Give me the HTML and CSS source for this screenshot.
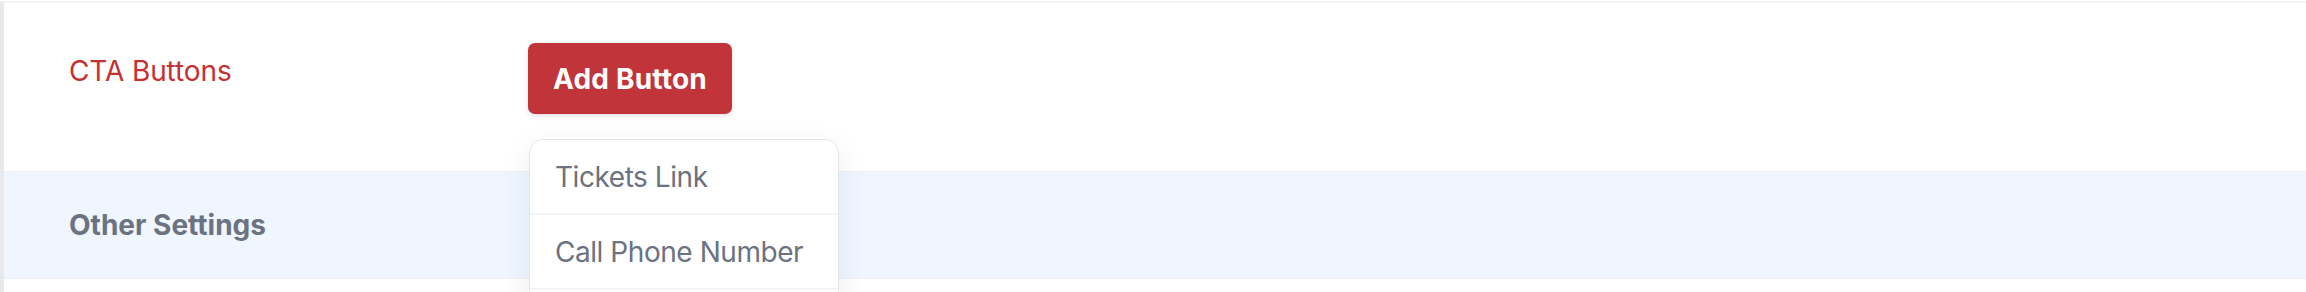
FILE: index.html
```html
<!DOCTYPE html>
<html>
<head>
<meta charset="utf-8">
<link rel="stylesheet" href="styles.css">
</head>
<body>
<div class="panel">
  <div class="row cta-row">
    <div class="label cta-label">CTA Buttons</div>
    <div class="control">
      <button class="add-btn">Add Button</button>
      <div class="menu">
        <div class="menu-item">Tickets Link</div>
        <div class="menu-item">Call Phone Number</div>
        <div class="menu-item menu-more"></div>
      </div>
    </div>
  </div>
  <div class="row section-row">
    <div class="label section-label">Other Settings</div>
  </div>
  <div class="row empty-row"></div>
</div>
</body>
</html>
```
FILE: styles.css
```css
html, body {
  margin: 0;
  padding: 0;
  background: #ffffff;
  font-family: Inter, "Liberation Sans", sans-serif;
  font-size: 28px;
  line-height: 40px;
  overflow: hidden;
}
.panel {
  border-left: 4px solid #e8e9ec;
  margin-top: 1px;
  border-top: 2px solid #f3f4f6;
  height: 291px;
  box-sizing: border-box;
}
.row {
  display: flex;
  align-items: flex-start;
}
.cta-row {
  height: 168px;
  box-sizing: border-box;
  padding-top: 40px;
}
.label {
  width: 459px;
  padding-left: 65px;
  box-sizing: content-box;
  flex-shrink: 0;
}
.cta-label {
  color: #c53030;
  margin-top: 8px;
  letter-spacing: -0.1px;
}
.control {
  position: relative;
}
.add-btn {
  font-family: inherit;
  font-size: 28px;
  line-height: 40px;
  font-weight: 700;
  letter-spacing: 0.2px;
  color: #ffffff;
  background: #c1353a;
  border: none;
  border-radius: 7px;
  padding: 16px 25px 15px;
  box-shadow: 0 2px 5px rgba(0, 0, 0, 0.12);
  display: block;
}
.menu {
  position: absolute;
  top: 96px;
  left: 1px;
  width: 310px;
  box-sizing: border-box;
  background: #ffffff;
  border: 1px solid #e3e5e9;
  border-radius: 14px;
  box-shadow: 0 10px 30px rgba(30, 40, 80, 0.08);
  z-index: 5;
}
.menu-item {
  color: #6b7280;
  padding: 17px 25px 16px;
  border-bottom: 2px solid #f3f4f6;
  white-space: nowrap;
  letter-spacing: -0.45px;
}
.menu-more {
  height: 40px;
  border-bottom: none;
}
.section-row {
  background: #eff6ff;
  border-top: 1px solid #edf0f4;
  border-bottom: 1px solid #edf0f4;
  padding: 33px 0;
}
.section-label {
  color: #6b7280;
  font-weight: 700;
}
```
